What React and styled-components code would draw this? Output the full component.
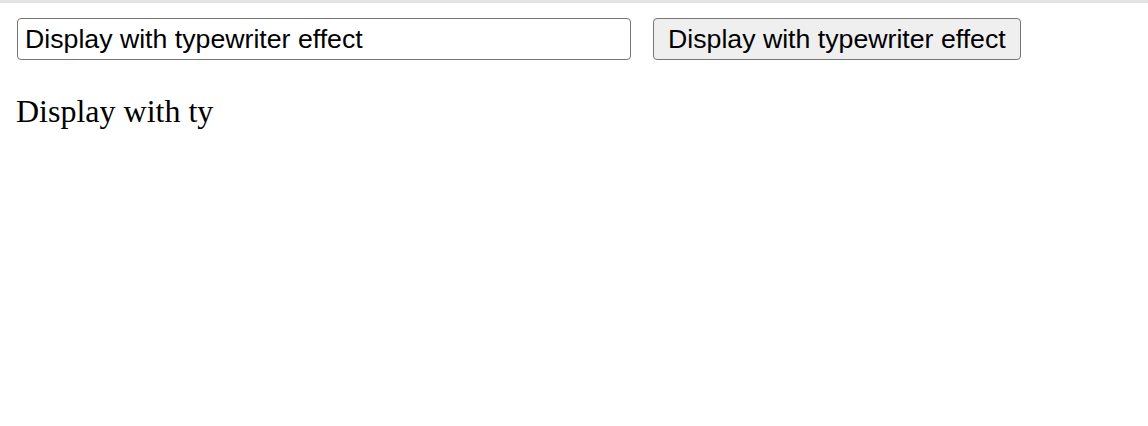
import React, { useState } from 'react';
import styled, { createGlobalStyle } from 'styled-components';

const GlobalStyle = createGlobalStyle`
    body {
        margin: 0;
        background: #ffffff;
    }
`;

const TopLine = styled.div`
    height: 3px;
    background: #e3e3e3;
`;

const Page = styled.div`
    padding: 15px 16px;
`;

const Controls = styled.div`
    display: flex;
    align-items: center;
    gap: 22px;
`;

const TextInput = styled.input`
    box-sizing: border-box;
    width: 614px;
    height: 42px;
    margin: 0 0 0 1px;
    padding: 0 7px;
    border: 1px solid #767676;
    border-radius: 4px;
    font-family: "Liberation Sans", Arial, sans-serif;
    font-size: 26.7px;
    color: #000;
    outline: none;
`;

const Button = styled.button`
    box-sizing: border-box;
    height: 42px;
    padding: 0 14px;
    border: 1px solid #767676;
    border-radius: 4px;
    background: #efefef;
    font-family: "Liberation Sans", Arial, sans-serif;
    font-size: 26.7px;
    color: #000;
`;

const Output = styled.p`
    margin: 33px 0 0;
    font-family: "Liberation Serif", "Times New Roman", serif;
    font-size: 32px;
    color: #000;
`;

function App() {
    const [text, setText] = useState('Display with typewriter effect');

    return (
        <>
            <GlobalStyle />
            <TopLine />
            <Page>
                <Controls>
                    <TextInput value={text} onChange={(e) => setText(e.target.value)} />
                    <Button>Display with typewriter effect</Button>
                </Controls>
                <Output>Display with ty</Output>
            </Page>
        </>
    );
}

export default App;
